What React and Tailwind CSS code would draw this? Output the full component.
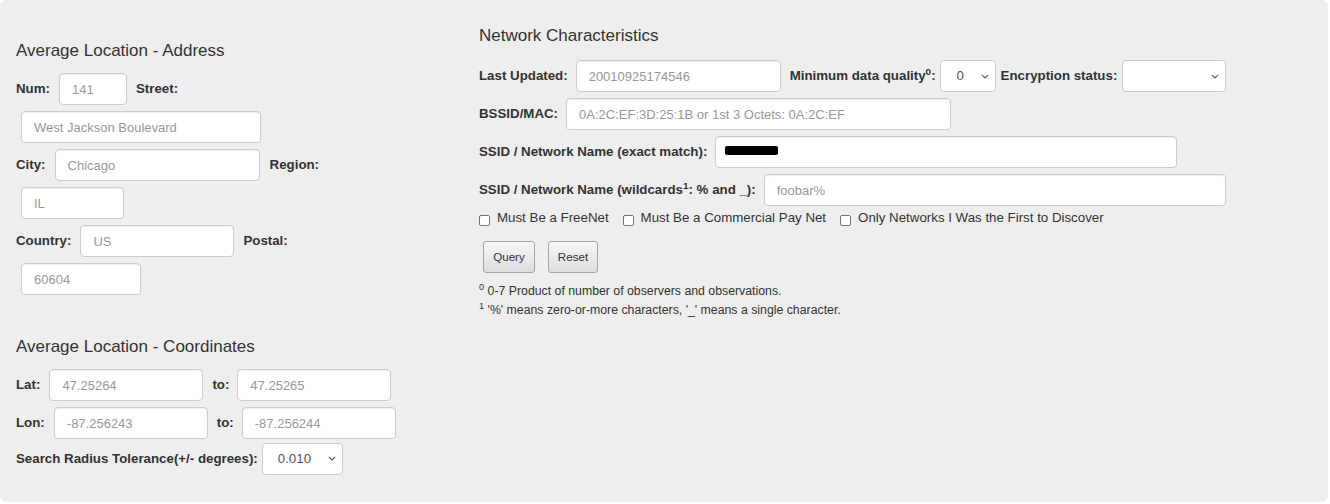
import React from "react";

const Label = ({ children, cls = "" }) => (
  <span className={"font-bold text-[13.3px] text-[#333] whitespace-nowrap shrink-0 " + cls}>{children}</span>
);

const Input = ({ ph, cls = "" }) => (
  <input
    readOnly
    placeholder={ph}
    className={
      "h-[32px] shrink-0 bg-white border border-[#ccc] rounded-[4px] shadow-[inset_0_1px_1px_rgba(0,0,0,0.075)] pl-[12px] text-[13px] text-[#555] placeholder:text-[#999] outline-none " +
      cls
    }
  />
);

const Chevron = () => (
  <svg width="8" height="5" viewBox="0 0 8 5" className="shrink-0">
    <path d="M0.8 0.8 L4 4 L7.2 0.8" fill="none" stroke="#555" strokeWidth="1.1" />
  </svg>
);

const Select = ({ value, cls = "" }) => (
  <div
    className={
      "h-[32px] shrink-0 bg-white border border-[#ccc] rounded-[4px] flex items-center justify-between pl-[16px] pr-[6px] text-[13.3px] text-[#555] " +
      cls
    }
  >
    <span>{value}</span>
    <Chevron />
  </div>
);

const Check = ({ label, cls = "" }) => (
  <div className={"flex items-center shrink-0 " + cls}>
    <span className="w-[11px] h-[11px] mt-[5px] border border-[#767676] rounded-[2px] bg-white shrink-0" />
    <span className="ml-[7px] text-[13.3px] text-[#333] whitespace-nowrap">{label}</span>
  </div>
);

const Button = ({ children, cls = "" }) => (
  <div
    className={
      "h-[32px] flex items-center justify-center rounded-[3px] border border-[#a6a6a6] bg-gradient-to-b from-[#f7f7f7] to-[#dddddd] text-[11.6px] text-[#333] " +
      cls
    }
  >
    {children}
  </div>
);

export default function App() {
  return (
    <div className="w-[1330px] h-[504px] bg-white font-['Liberation_Sans',Arial,sans-serif]">
      <div className="w-[1328px] h-[502px] bg-[#eeeeee] rounded-[6px] flex text-[#333]">
        {/* Left column */}
        <div className="w-[479px] shrink-0 pl-[16px] pt-[41px]">
          <div className="text-[17px] leading-[20px] text-[#333]">Average Location - Address</div>
          <div className="mt-[12px] flex flex-col gap-[6px]">
            <div className="flex items-center h-[32px]">
              <Label>Num:</Label>
              <Input ph="141" cls="ml-[9px] w-[68px]" />
              <Label cls="ml-[9px]">Street:</Label>
            </div>
            <div className="flex items-center h-[32px]">
              <Input ph="West Jackson Boulevard" cls="ml-[5px] w-[240px]" />
            </div>
            <div className="flex items-center h-[32px]">
              <Label>City:</Label>
              <Input ph="Chicago" cls="ml-[9px] w-[205px]" />
              <Label cls="ml-[10px]">Region:</Label>
            </div>
            <div className="flex items-center h-[32px]">
              <Input ph="IL" cls="ml-[5px] w-[103px]" />
            </div>
            <div className="flex items-center h-[32px]">
              <Label>Country:</Label>
              <Input ph="US" cls="ml-[9px] w-[154px]" />
              <Label cls="ml-[9px]">Postal:</Label>
            </div>
            <div className="flex items-center h-[32px]">
              <Input ph="60604" cls="ml-[5px] w-[120px]" />
            </div>
          </div>

          <div className="mt-[42px] text-[17px] leading-[20px] text-[#333]">Average Location - Coordinates</div>
          <div className="mt-[12px] flex flex-col gap-[6px]">
            <div className="flex items-center h-[32px]">
              <Label>Lat:</Label>
              <Input ph="47.25264" cls="ml-[9px] w-[154px]" />
              <Label cls="ml-[9px]">to:</Label>
              <Input ph="47.25265" cls="ml-[8px] w-[154px]" />
            </div>
            <div className="flex items-center h-[32px]">
              <Label>Lon:</Label>
              <Input ph="-87.256243" cls="ml-[9px] w-[154px]" />
              <Label cls="ml-[9px]">to:</Label>
              <Input ph="-87.256244" cls="ml-[8px] w-[154px]" />
            </div>
          </div>
          <div className="mt-[4px] flex items-center h-[31px]">
            <Label>Search Radius Tolerance(+/- degrees):</Label>
            <Select value="0.010" cls="ml-[4px] w-[81px] h-[31px] !pl-[15px]" />
          </div>
        </div>

        {/* Right column */}
        <div className="flex-1 pt-[26px]">
          <div className="text-[17px] leading-[20px] text-[#333]">Network Characteristics</div>
          <div className="mt-[14px] flex flex-col gap-[6px]">
            <div className="flex items-center h-[32px]">
              <Label>Last Updated:</Label>
              <Input ph="20010925174546" cls="ml-[8px] w-[205px]" />
              <Label cls="ml-[9px]">
                Minimum data quality<sup>0</sup>:
              </Label>
              <Select value="0" cls="ml-[4px] w-[56px]" />
              <Label cls="ml-[5px]">Encryption status:</Label>
              <Select value="" cls="ml-[5px] w-[104px]" />
            </div>
            <div className="flex items-center h-[32px]">
              <Label>BSSID/MAC:</Label>
              <Input ph="0A:2C:EF:3D:25:1B or 1st 3 Octets: 0A:2C:EF" cls="ml-[8px] w-[385px]" />
            </div>
            <div className="flex items-center h-[32px]">
              <Label>SSID / Network Name (exact match):</Label>
              <div className="ml-[8px] w-[462px] h-[32px] bg-white border border-[#ccc] rounded-[4px] shadow-[inset_0_1px_1px_rgba(0,0,0,0.075)] flex items-center pl-[9px]">
                <span className="w-[53px] h-[9px] mb-[3px] bg-black rounded-[2px]" />
              </div>
            </div>
            <div className="flex items-center h-[32px]">
              <Label>
                SSID / Network Name (wildcards<sup>1</sup>: % and _):
              </Label>
              <Input ph="foobar%" cls="ml-[8px] w-[462px]" />
            </div>
          </div>
          <div className="mt-[1.5px] h-[20px] flex items-center">
            <Check label="Must Be a FreeNet" />
            <Check label="Must Be a Commercial Pay Net" cls="ml-[14px]" />
            <Check label="Only Networks I Was the First to Discover" cls="ml-[14px]" />
          </div>
          <div className="mt-[13px] flex">
            <Button cls="ml-[4px] w-[52px]">Query</Button>
            <Button cls="ml-[13px] w-[50px]">Reset</Button>
          </div>
          <div className="mt-[9px] text-[12.3px] leading-[19px] text-[#333]">
            <div>
              <sup>0</sup> 0-7 Product of number of observers and observations.
            </div>
            <div>
              <sup>1</sup> '%' means zero-or-more characters, '_' means a single character.
            </div>
          </div>
        </div>
      </div>
    </div>
  );
}
